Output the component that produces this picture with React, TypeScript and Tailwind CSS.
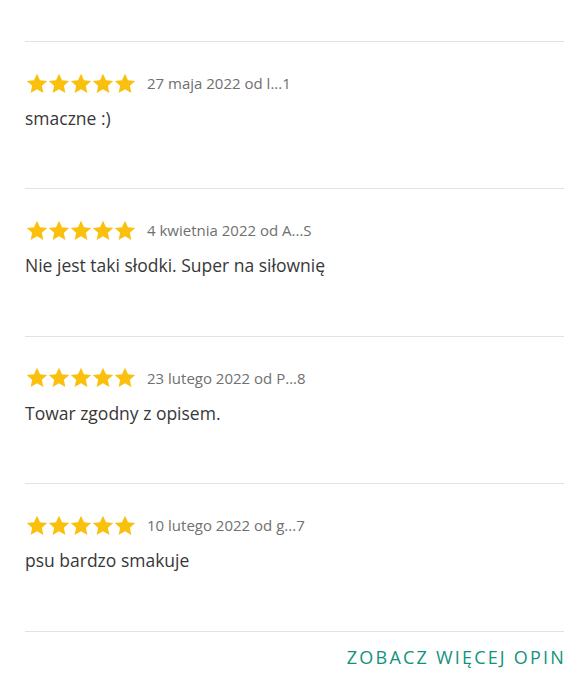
const reviews = [
  { date: "27 maja 2022 od l...1", text: "smaczne :)" },
  { date: "4 kwietnia 2022 od A...S", text: "Nie jest taki słodki. Super na siłownię" },
  { date: "23 lutego 2022 od P...8", text: "Towar zgodny z opisem." },
  { date: "10 lutego 2022 od g...7", text: "psu bardzo smakuje" },
];

function Star() {
  return (
    <svg width="22" height="21" viewBox="0 0 24 23" className="block">
      <path
        d="M12 0.8l3.3 7.2 7.9 0.8-5.9 5.3 1.7 7.8L12 17.9l-7 4 1.7-7.8L0.8 8.8l7.9-0.8z"
        fill="#f9c00d"
      />
    </svg>
  );
}

export default function App() {
  return (
    <main
      className="min-h-screen bg-white overflow-hidden"
      style={{ fontFamily: '"Open Sans", sans-serif' }}
    >
      <div className="ml-[25px] pt-[41px]">
        {reviews.map((r) => (
          <div key={r.date} className="h-[147.4px] border-t border-[#e2e2e2] pt-[30px]">
            <div className="flex items-center">
              <div className="flex ml-[1px]">
                <Star />
                <Star />
                <Star />
                <Star />
                <Star />
              </div>
              <span className="ml-[11px] text-[15px] text-[#707070] leading-[22px]">{r.date}</span>
            </div>
            <p className="mt-[12px] text-[17.5px] leading-[24px] text-[#383838]">{r.text}</p>
          </div>
        ))}
        <div className="border-t border-[#e2e2e2] flex justify-end pt-[13px]">
          <span className="text-[18px] leading-[24px] tracking-[2.2px] text-[#13927a] whitespace-nowrap mr-[-2px]">
            ZOBACZ WIĘCEJ OPIN
          </span>
        </div>
      </div>
    </main>
  );
}
